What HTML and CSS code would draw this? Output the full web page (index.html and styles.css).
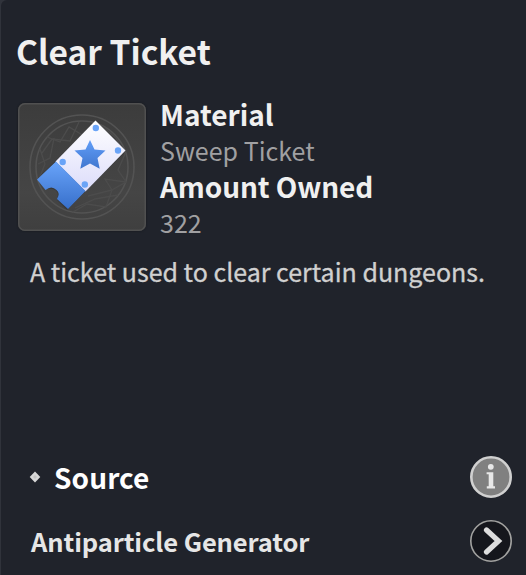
FILE: index.html
```
<!DOCTYPE html>
<html lang="en">
<head>
<meta charset="utf-8">
<title>Clear Ticket</title>
<link rel="stylesheet" href="styles.css">
</head>
<body>
<main class="panel">
  <h1 class="title">Clear Ticket</h1>
  <section class="item">
    <div class="thumb">
      <svg viewBox="0 0 128 128" width="128" height="128">
        <defs>
          <linearGradient id="paper" x1="0" y1="0" x2="0" y2="1"><stop offset="0" stop-color="#fff"/><stop offset="1" stop-color="#dcdcfa"/></linearGradient>
          <linearGradient id="stub" x1="0" y1="0" x2="0" y2="1"><stop offset="0" stop-color="#69a4fa"/><stop offset="1" stop-color="#376fca"/></linearGradient>
          <linearGradient id="star" x1="0" y1="0" x2="0" y2="1"><stop offset="0" stop-color="#609df8"/><stop offset="1" stop-color="#4177cf"/></linearGradient>
        </defs>
        <g fill="none" stroke="#535353" stroke-width="1.6">
          <circle cx="64" cy="64" r="52"/>
          <circle cx="64" cy="64" r="46"/>
          <g stroke="#4c4c4c" stroke-width="1.3">
            <path d="M24 50L34 36L52 38L61 19M84 23L98 35L107 51L100 67L108 79L94 87L88 104L69 101L55 109M21 76L27 61L22 46"/>
            <path d="M29 34L42 39L51 24L66 33M20 61L32 55L36 35M70 93L94 87L87 76L108 79M57 105L77 96L100 92"/>
          </g>
        </g>
        <path d="M78 18L108 48L49 107L39 97Q42 88 35 86Q30 85 27 86L19 76Z" fill="#222" opacity=".35"/>
        <path d="M77.500 17.500L107.500 47.500L67.500 88.500L37.500 58.500Z" fill="url(#paper)"/>
        <path d="M38 58.500L67.500 88L50 106L39 96Q42.500 90 38.500 87Q33.500 82 27.500 87L19 76.500Z" fill="url(#stub)"/>
        <g fill="#6aa4f7"><circle cx="77.800" cy="25" r="3.200"/><circle cx="100" cy="47.500" r="3.200"/><circle cx="44.700" cy="59" r="3.200"/><circle cx="66.800" cy="81.500" r="3.200"/></g>
        <path d="M72 37L76.500 46.500L87.500 47.500L79.500 55L81.700 65.800L72 60.500L62.300 65.800L64.500 55L56.500 47.500L67.500 46.500Z" fill="url(#star)"/>
      </svg>
    </div>
    <dl class="facts">
      <dt>Material</dt>
      <dd>Sweep Ticket</dd>
      <dt class="amount">Amount Owned</dt>
      <dd>322</dd>
    </dl>
  </section>
  <p class="description">A ticket used to clear certain dungeons.</p>
  <section class="sources">
    <div class="row">
      <svg class="bullet" viewBox="0 0 12 12" width="12" height="12"><path d="M6 .5L11.300 6L6 11.500L.7 6Z" fill="#d8d8d8"/><path d="M6 4L8 6L6 8L4 6Z" fill="#c4c4c4"/></svg>
      <h2 class="source">Source</h2>
      <svg class="icon" viewBox="0 0 44 44" width="44" height="44"><circle cx="22" cy="22" r="19.700" fill="#808080" stroke="#d0d0d0" stroke-width="2.600"/><circle cx="21.800" cy="11.800" r="2.900" fill="#e8e8e8"/><path d="M17.600 17.200H24.300V31.300H26V33.500H17.800V31.300H19.700V19.300H17.600Z" fill="#e8e8e8"/></svg>
    </div>
    <div class="row">
      <span class="place">Antiparticle Generator</span>
      <svg class="icon" viewBox="0 0 44 44" width="44" height="44"><circle cx="22" cy="22" r="20.200" fill="#15161c" stroke="#a2a2a0" stroke-width="1.600"/><path d="M17.500 11L29.500 22L17.500 33" fill="none" stroke="#ddd" stroke-width="5.200" stroke-linecap="round" stroke-linejoin="miter"/></svg>
    </div>
  </section>
</main>
</body>
</html>
```
FILE: styles.css
```
* { box-sizing: border-box; }
body { margin: 0; background: #30333b; }
.panel {
  display: flex;
  flex-direction: column;
  width: 525px;
  height: 575px;
  margin-left: 1px;
  padding: 33px 13px 0 15px;
  overflow: hidden;
  border-top-left-radius: 6px;
  background: #20232b;
  color: #f0f0f0;
  font-family: "Noto Sans CJK SC", "Noto Sans", sans-serif;
  white-space: nowrap;
}
.panel > * { flex-shrink: 0; }
h1, h2, p, dl, dd { margin: 0; }
.title { height: 70px; font-size: 33.500px; line-height: 36px; font-weight: 700; }
.item { display: flex; height: 145px; }
.thumb {
  width: 128px;
  height: 128px;
  margin-left: 2px;
  border-radius: 7px;
  background: linear-gradient(#3c3c3c, #454545 70%, #3f3f3f);
  box-shadow: inset 0 0 0 1.500px #505050, 0 0 2px #14161a;
}
.thumb svg { display: block; }
.facts { margin: -7px 0 0 14px; line-height: 36px; }
.facts dt { height: 36px; font-size: 28px; font-weight: 700; }
.facts .amount { letter-spacing: -.1px; }
.facts dd { height: 36px; font-size: 25px; color: #a0a0a2; }
.description { height: 198px; padding: 5px 0 0 14px; font-size: 25px; line-height: 36px; color: #d0d0d0; -webkit-text-stroke: .3px #d0d0d0; }
.sources { padding-left: 13px; }
.row { display: flex; align-items: center; height: 64px; }
.row:first-child { margin-top: -1px; }
.bullet { margin: 0 13px 0 0; }
.source { font-size: 28px; line-height: 36px; letter-spacing: .1px; color: #fff; }
.place { padding-left: 2px; font-size: 25.500px; line-height: 36px; font-weight: 700; letter-spacing: -.1px; color: #e6e6e6; }
.icon { margin-left: auto; }
```
